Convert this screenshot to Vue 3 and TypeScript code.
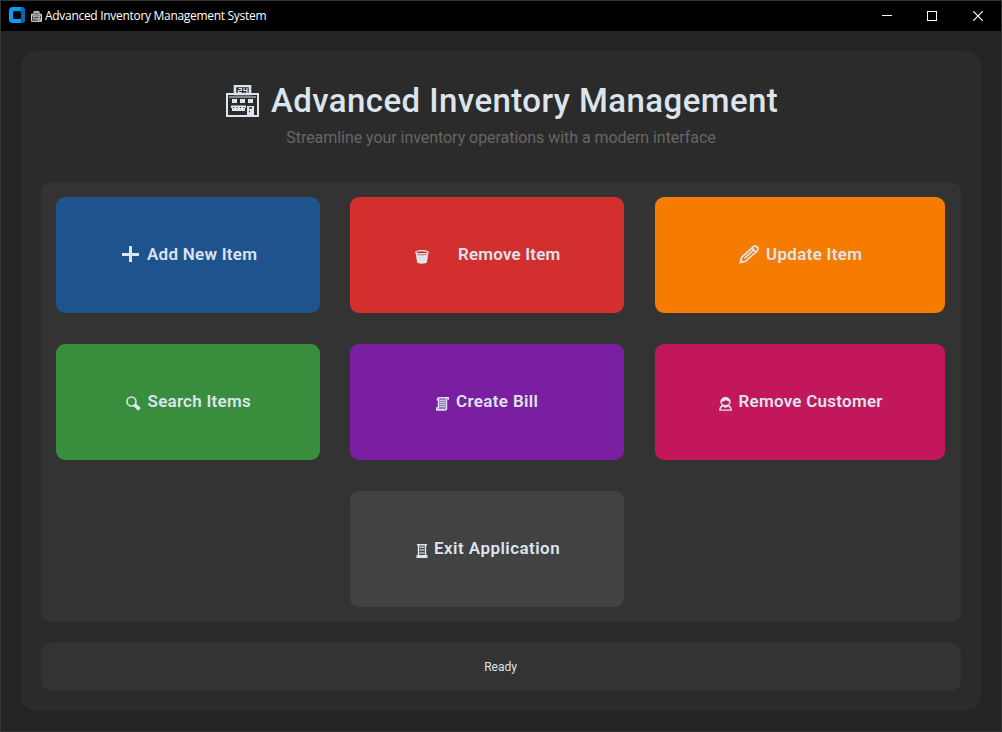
<script setup lang="ts">
interface Action {
  id: string
  label: string
}

const actions: Action[] = [
  { id: 'add', label: 'Add New Item' },
  { id: 'remove', label: 'Remove Item' },
  { id: 'update', label: 'Update Item' },
  { id: 'search', label: 'Search Items' },
  { id: 'bill', label: 'Create Bill' },
  { id: 'customer', label: 'Remove Customer' },
  { id: 'exit', label: 'Exit Application' },
]
</script>

<template>
  <div class="window">
    <header class="titlebar">
      <svg class="app-logo" width="16" height="16" viewBox="0 0 16 16">
        <rect width="16" height="16" rx="4" fill="#0a9bfa" />
        <path d="M12 0Q16 0 16 4V12Q16 16 12 16L11.500 12V4Z" fill="#0565b5" />
        <rect x="4" y="4" width="8" height="8" rx="1.500" fill="#000" />
      </svg>
      <svg class="app-store" width="11" height="11" viewBox="0 0 34 33">
        <path d="M1.500 9.500H9V1.500H25V9.500H32.500V31.500H1.500Z" fill="#444" stroke="#ddd" stroke-width="3" />
        <path d="M12 5H22M2 12H32M6 17H12M14 17H20M22 17H28M6 24H20M22 31V22H28V31" fill="none" stroke="#ddd" stroke-width="3" />
      </svg>
      <span class="caption">Advanced Inventory Management System</span>
      <div class="controls">
        <svg width="10" height="10" viewBox="0 0 10 10"><path d="M0 4.500H10" stroke="#fff" /></svg>
        <svg width="10" height="10" viewBox="0 0 10 10"><rect x=".5" y=".5" width="9" height="9" fill="none" stroke="#fff" /></svg>
        <svg width="10" height="10" viewBox="0 0 10 10"><path d="M.3.3 9.700 9.700M9.700.3.3 9.700" stroke="#fff" stroke-width="1.200" /></svg>
      </div>
    </header>

    <main class="panel">
      <div class="heading">
        <svg class="store" width="33" height="32" viewBox="0 0 33 32">
          <path d="M1 9H9V1H24V9H32V31H1Z" fill="none" stroke="#dce4ee" stroke-width="2" />
          <path d="M9 1H24V9H9Z" fill="none" stroke="#dce4ee" stroke-width="2.600" />
          <path d="M12.500 3.500H15.500V5.500H12.500V7.500H15.500M18 3V5.500H21M21 3V8" fill="none" stroke="#dce4ee" stroke-width="1.200" />
          <path d="M2 9.500H31M3 12H30" stroke="#dce4ee" stroke-width="1" />
          <path d="M6 14H11V18H6ZM14 14H19V18H14ZM22 14H27V18H22Z" fill="#dce4ee" />
          <path d="M5 20.500H20V23H19V26H6V23H5Z" fill="#dce4ee" />
          <path d="M7.500 22V23M11 22V23M14.500 22V23M18 22V23" stroke="#2b2b2b" />
          <path d="M21 31V21H28V31Z" fill="#dce4ee" />
          <path d="M23 23H26M23 26.500H24" stroke="#2b2b2b" stroke-width="1.500" />
        </svg>
        <h1>Advanced Inventory Management</h1>
      </div>
      <p class="subtitle">Streamline your inventory operations with a modern interface</p>

      <section class="grid">
        <button v-for="a in actions" :key="a.id" class="action" :class="a.id">
          <svg v-if="a.id === 'add'" class="icon" width="17" height="16" viewBox="0 0 17 16">
            <path d="M8.500 0V16M0 8.500H17" stroke="currentColor" stroke-width="3" />
          </svg>
          <svg v-else-if="a.id === 'remove'" class="icon" width="14" height="14" viewBox="0 0 14 14">
            <path d="M.5 2 2 12Q2.500 13.700 7 13.700T12 12L13.500 2Z" fill="currentColor" />
            <ellipse cx="7" cy="2.200" rx="6.200" ry="1.600" fill="#d32f2f" stroke="currentColor" stroke-width="1.300" />
            <path d="M2 4.500Q7 5.300 12 4.500" fill="none" stroke="#d32f2f" stroke-width=".6" />
          </svg>
          <svg v-else-if="a.id === 'update'" class="icon" width="20" height="19" viewBox="0 0 20 19">
            <path d="M1.300 17.700 2.500 12.500 14 1.900Q16 .4 18 2T18.200 5.800L6.700 16.300ZM13 3.200 16.600 6.900M5.500 13.300 14.500 5" fill="none" stroke="currentColor" stroke-width="1.700" />
            <path d="M.5 18.500 2 14 5 17Z" fill="currentColor" />
          </svg>
          <svg v-else-if="a.id === 'search'" class="icon" width="15" height="15" viewBox="0 0 15 15">
            <circle cx="5.500" cy="5.500" r="4.500" fill="none" stroke="currentColor" stroke-width="1.600" />
            <path d="M8.500 8.700 13.500 13.300" stroke="currentColor" stroke-width="3.800" />
          </svg>
          <svg v-else-if="a.id === 'bill'" class="icon" width="13" height="14" viewBox="0 0 13 14">
            <path d="M3 2H10.500V12H3Z" fill="currentColor" opacity=".45" />
            <path d="M12.500 2.700V.8H3Q1.500.8 1.500 2.700H2.500V11H.7V13H9.500Q11 12.500 10.500 10.500V2Q10.500.8 12 .8" fill="none" stroke="currentColor" stroke-width="1.400" />
            <path d="M4 3.500H9M4 5.500H9M4 7.500H9M4 9.500H9M2 12.500H9" stroke="currentColor" stroke-width="1" opacity=".7" />
          </svg>
          <svg v-else-if="a.id === 'customer'" class="icon" width="13" height="14" viewBox="0 0 13 14">
            <ellipse cx="6.500" cy="4.800" rx="4.500" ry="4" fill="none" stroke="currentColor" stroke-width="1.500" />
            <path d="M2 4.700Q5.500 5 7 3 8.500 4.700 11 4.700L10 1.500 6.500.3 3 1.500Z" fill="currentColor" />
            <path d="M4.500 8.700Q.9 9.300.9 13.100H12.100Q12.100 9.300 8.500 8.700M4.500 9.200 6.500 10.200 8.500 9.200" fill="none" stroke="currentColor" stroke-width="1.400" />
          </svg>
          <svg v-else class="icon" width="12" height="14" viewBox="0 0 12 14">
            <path d="M1 .7H11M2.500.7V12M9.500.7V12M.5 13.200H11.500M.5 11.700H11.500" fill="none" stroke="currentColor" stroke-width="1.400" />
            <path d="M3.500 3.200H8.500M3.500 6H8.500M3.500 9H8.500" stroke="currentColor" stroke-width="1.400" opacity=".8" />
          </svg>
          <span class="label">{{ a.label }}</span>
        </button>
      </section>

      <footer class="status"><span>Ready</span></footer>
    </main>
  </div>
</template>

<style>
body {
  margin: 0;
  background: #242424;
}
</style>

<style scoped>
.window {
  box-sizing: border-box;
  width: 1002px;
  height: 732px;
  border: 1px solid #333;
  background: #242424;
  color: #dce4ee;
  font-family: Roboto, "Liberation Sans", sans-serif;
  overflow: hidden;
}
.titlebar {
  display: flex;
  align-items: center;
  height: 30px;
  padding: 0 19px 0 8px;
  box-sizing: border-box;
  background: #000;
}
.app-logo {
  margin-right: 6px;
  margin-top: -2px;
}
.app-store {
  margin-right: 3px;
}
.caption {
  color: #fff;
  font: 12px/16px "Open Sans", "Noto Sans", sans-serif;
  letter-spacing: -0.3px;
  white-space: nowrap;
}
.controls {
  display: flex;
  gap: 36px;
  margin-left: auto;
  margin-right: -1px;
}
.controls svg {
  display: block;
}
.controls svg:first-child {
  margin-right: -1px;
}
.panel {
  box-sizing: border-box;
  width: 960px;
  height: 660px;
  margin: 20px;
  padding: 30px 20px 20px;
  border-radius: 15px;
  background: #2b2b2b;
}
.heading {
  display: flex;
  height: 40px;
  padding-left: 185px;
}
.store {
  flex: none;
  margin-top: 4px;
}
h1 {
  margin: 0 0 0 12px;
  font-size: 33px;
  font-weight: 500;
  line-height: 40px;
  letter-spacing: 0.42px;
  white-space: nowrap;
}
.subtitle {
  height: 20px;
  margin: 7px 0 34px;
  text-align: center;
  color: #666;
  font-size: 16px;
  line-height: 20px;
  letter-spacing: -0.05px;
}
.grid {
  box-sizing: border-box;
  display: grid;
  grid-template-columns: 264px 275px 290px;
  grid-template-rows: repeat(3, 116px);
  column-gap: 30px;
  row-gap: 31px;
  height: 440px;
  padding: 15px;
  border-radius: 10px;
  background: #333;
}
.action {
  display: flex;
  align-items: flex-start;
  padding: 0;
  border: 0;
  border-radius: 9px;
  color: #dce4ee;
  font: 600 17px/20px Roboto, "Liberation Sans", sans-serif;
}
.icon {
  flex: none;
}
.label {
  margin-top: 47px;
  letter-spacing: 0.25px;
  white-space: nowrap;
}
.remove,
.bill,
.exit {
  width: 274px;
}
.add { background: #1f538d; padding-left: 66px; }
.add .icon { margin: 49px 8px 0 0; }
.remove { background: #d32f2f; padding-left: 65px; }
.remove .icon { margin: 53px 29px 0 0; }
.remove .label { letter-spacing: 0.18px; }
.update { background: #f57c00; padding-left: 84px; }
.update .icon { margin: 48px 7px 0 0; }
.update .label { letter-spacing: 0.3px; }
.search { background: #388e3c; padding-left: 70px; }
.search .icon { margin: 52px 6.500px 0 0; }
.bill { background: #7b1fa2; padding-left: 86px; }
.bill .icon { margin: 53px 7px 0 0; }
.bill .label { letter-spacing: 0.35px; }
.customer { background: #c2185b; padding-left: 64px; }
.customer .icon { margin: 53px 6.500px 0 0; }
.exit { grid-column: 2; background: #424242; padding-left: 66px; }
.exit .icon { margin: 53px 6px 0 0; }
.exit .label { letter-spacing: 0.45px; }
.status {
  display: flex;
  align-items: center;
  justify-content: center;
  height: 48px;
  margin-top: 21px;
  border-radius: 10px;
  background: #333;
  font-size: 12px;
}
.status span {
  margin-right: 1px;
}
</style>
